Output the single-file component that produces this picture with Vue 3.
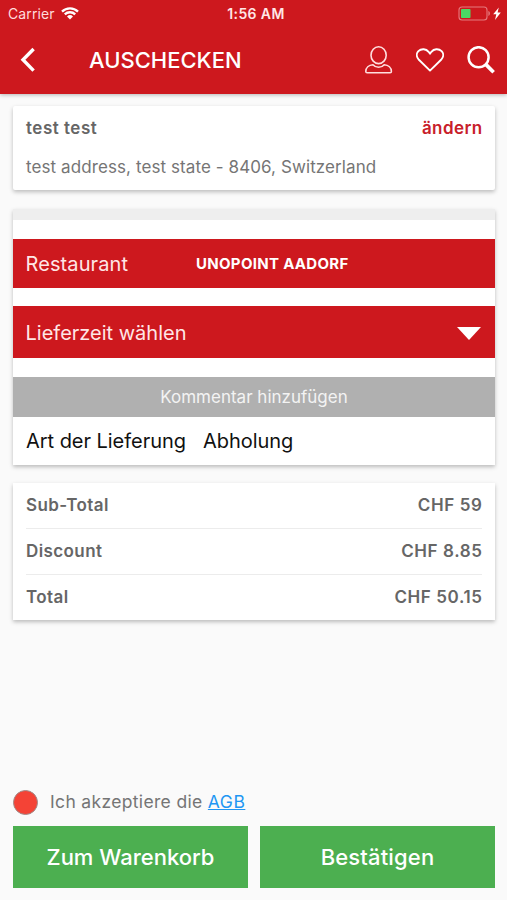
<template>
  <div class="checkout">
    <header class="app-header">
      <div class="status-bar">
        <div class="status-left">
          <span class="carrier">Carrier</span>
          <svg class="wifi" viewBox="0 0 18 13" width="18" height="13">
            <path d="M1 4.6a11.3 11.3 0 0 1 16 0" />
            <path d="M3.8 7.4a7.4 7.4 0 0 1 10.4 0" />
            <path class="wifi-dot" d="M9 12.4L6 9.4a4.3 4.3 0 0 1 6 0z" />
          </svg>
        </div>
        <span class="clock">1:56 AM</span>
        <div class="status-right">
          <svg viewBox="0 0 44 16" width="44" height="16">
            <rect class="battery-case" x="1" y="1" width="28" height="13" rx="3" />
            <rect class="battery-level" x="3" y="3" width="9.5" height="9" rx="0.8" />
            <path class="battery-tip" d="M30.4 5.1c2 .6 2 4.2 0 4.8z" />
            <path class="bolt" d="M40.8 1.5L35.2 8.3h3.1l-1.3 5.6 5.8-7.3h-3.2z" />
          </svg>
        </div>
      </div>

      <div class="nav-bar">
        <button class="icon-btn back-btn" aria-label="Zurück">
          <svg viewBox="0 0 16 26" width="16" height="26">
            <path class="chevron" d="M13.6 2L3 12.8l10.6 10.8" />
          </svg>
        </button>
        <h1 class="nav-title">AUSCHECKEN</h1>
        <div class="nav-actions">
          <button class="icon-btn" aria-label="Konto">
            <svg viewBox="0 0 28 28" width="28" height="28">
              <ellipse class="thin" cx="13.6" cy="9.2" rx="7.6" ry="8.4" />
              <path class="thin" d="M8 18.7C3.8 19 .8 21.6.8 25.4c0 .8.5 1.3 1.3 1.3h23c.8 0 1.3-.5 1.3-1.3 0-3.8-3-6.4-7.2-6.7-1.3 1.6-3.2 2.5-5.6 2.5s-4.3-.9-5.6-2.5z" />
            </svg>
          </button>
          <button class="icon-btn" aria-label="Favoriten">
            <svg viewBox="0 0 28 24" width="28" height="24">
              <path class="heart" d="M14 22.6L2.9 11.8C.2 9 .3 5.4 2.4 3.2c3-3 7.8-2.4 10.2.6L14 5.7l1.4-1.9c2.4-3 7.2-3.6 10.2-.6 2.1 2.2 2.2 5.8-.5 8.6z" />
            </svg>
          </button>
          <button class="icon-btn" aria-label="Suche">
            <svg viewBox="0 0 28 28" width="28" height="28">
              <circle class="lens" cx="11.6" cy="11.2" r="10" />
              <path class="handle" d="M18.8 18.4l7.8 7.8" />
            </svg>
          </button>
        </div>
      </div>
    </header>

    <main class="content">
      <section class="card address-card">
        <div class="address-head">
          <span class="name">test test</span>
          <a class="change-link">ändern</a>
        </div>
        <p class="address">test address, test state - 8406, Switzerland</p>
      </section>

      <section class="card delivery-card">
        <div class="strip"></div>
        <div class="red-row restaurant">
          <span class="restaurant-label">Restaurant</span>
          <span class="restaurant-name">UNOPOINT AADORF</span>
        </div>
        <div class="red-row time-select">
          <span class="time-label">Lieferzeit wählen</span>
          <svg viewBox="0 0 24 13" width="24" height="13">
            <path class="caret" d="M0 0h24L12 13z" />
          </svg>
        </div>
        <button class="comment-btn"><span>Kommentar hinzufügen</span></button>
        <div class="delivery-type">
          <span class="type-label">Art der Lieferung</span>
          <span class="type-value">Abholung</span>
        </div>
      </section>

      <section class="card totals-card">
        <div v-for="row in totals" :key="row.label" class="total-row">
          <span>{{ row.label }}</span>
          <span class="total-value">{{ row.value }}</span>
        </div>
      </section>
    </main>

    <footer class="bottom">
      <div class="terms">
        <span class="radio" :class="{ 'radio--on': accepted }" @click="accepted = !accepted"></span>
        <span class="terms-text">Ich akzeptiere die <a class="terms-link">AGB</a></span>
      </div>
      <div class="actions">
        <button class="action-btn"><span>Zum Warenkorb</span></button>
        <button class="action-btn confirm-btn"><span>Bestätigen</span></button>
      </div>
    </footer>
  </div>
</template>

<script setup>
import { ref } from 'vue'

const accepted = ref(false)

const totals = [
  { label: 'Sub-Total', value: 'CHF 59' },
  { label: 'Discount', value: 'CHF 8.85' },
  { label: 'Total', value: 'CHF 50.15' }
]
</script>

<style>
body {
  margin: 0;
  background: #fafafa;
}
</style>

<style scoped>
.checkout {
  height: 900px;
  display: flex;
  flex-direction: column;
  background: #fafafa;
  color: #666;
  font-family: Inter, "Liberation Sans", sans-serif;
  overflow: hidden;
}

button {
  border: none;
  padding: 0;
  font-family: inherit;
  cursor: pointer;
}

svg {
  display: block;
  fill: none;
  stroke: #fff;
}

/* Header */
.app-header {
  height: 93.5px;
  flex-shrink: 0;
  background: #cd181e;
  color: #fff;
  box-shadow: 0 1px 4px rgba(0, 0, 0, 0.28);
}

.status-bar {
  height: 27px;
  padding: 0 5px 0 8px;
  display: grid;
  grid-template-columns: 1fr auto 1fr;
  align-items: center;
}

.status-left {
  display: flex;
  align-items: center;
  gap: 7px;
}

.carrier {
  font-size: 14px;
  letter-spacing: 0.1px;
  color: #ffdcdc;
}

.wifi {
  margin-left: -1px;
  stroke-width: 2.3;
}

.wifi-dot {
  fill: #fff;
  stroke: none;
}

.clock {
  margin-left: 2px;
  font-size: 14px;
  font-weight: 600;
  letter-spacing: 0.4px;
  color: #ffe6e6;
}

.status-right {
  justify-self: end;
}

.battery-case {
  stroke: #e57a7e;
  stroke-width: 1.1;
}

.battery-level {
  fill: #4cd964;
  stroke: none;
}

.battery-tip {
  fill: #e57a7e;
  stroke: none;
}

.bolt {
  fill: #fff;
  stroke: none;
}

.nav-bar {
  height: 66px;
  padding: 0 12px 0 20px;
  display: flex;
  align-items: center;
}

.icon-btn {
  background: none;
}

.chevron {
  stroke-width: 3.4;
}

.nav-title {
  flex: 1;
  margin: 0 0 0 53px;
  font-size: 22px;
  font-weight: 500;
}

.nav-actions {
  display: flex;
  align-items: center;
  gap: 23px;
}

.thin {
  stroke: #ffdede;
  stroke-width: 1.6;
  stroke-linejoin: round;
}

.heart {
  stroke-width: 1.9;
  stroke-linejoin: round;
}

.lens {
  stroke-width: 2.5;
}

.handle {
  stroke-width: 3.7;
}

/* Cards */
.content {
  flex: 1;
  padding: 12.5px 12px 0 13px;
}

.card {
  background: #fff;
  box-shadow: 0 2px 4px rgba(0, 0, 0, 0.25);
}

.address-card {
  height: 84px;
  box-sizing: border-box;
  padding: 12px 13px;
  border-radius: 2px;
}

.address-head {
  display: flex;
  justify-content: space-between;
  line-height: 20px;
  font-size: 17px;
  font-weight: 600;
  letter-spacing: 0.5px;
}

.change-link {
  margin-right: -0.5px;
  letter-spacing: 0.4px;
  color: #c8202a;
}

.address {
  margin: 19px 0 0;
  line-height: 20px;
  font-size: 17px;
  letter-spacing: 0.09px;
  color: #757575;
}

.delivery-card {
  height: 256px;
  margin-top: 19px;
}

.strip {
  height: 11px;
  background: #eee;
}

.red-row {
  box-sizing: border-box;
  padding: 0 14px 0 12.5px;
  display: flex;
  align-items: center;
  background: #cd181e;
  color: #ffe6e6;
  font-size: 20px;
}

.restaurant {
  height: 49px;
  margin-top: 19px;
}

.restaurant-label {
  width: 170.5px;
  letter-spacing: 0.1px;
}

.restaurant-name {
  font-size: 15px;
  font-weight: 700;
  letter-spacing: 0.3px;
  color: #fff;
}

.time-select {
  height: 52px;
  margin-top: 18px;
  padding-top: 2px;
  justify-content: space-between;
}

.caret {
  fill: #fff;
  stroke: none;
}

.comment-btn {
  width: 100%;
  height: 40px;
  margin-top: 19px;
  display: block;
  background: #b0b0b0;
  color: #f3f3f3;
  font-size: 17px;
}

.delivery-type {
  height: 48px;
  padding: 0 13px;
  display: flex;
  align-items: center;
  gap: 17px;
  color: #111;
  font-size: 20px;
  letter-spacing: -0.04px;
}

.totals-card {
  margin-top: 18px;
  padding: 0 13px;
}

.total-row {
  height: 45px;
  box-sizing: border-box;
  padding-bottom: 2px;
  display: flex;
  align-items: center;
  justify-content: space-between;
  line-height: 22px;
  font-size: 17px;
  font-weight: 600;
  letter-spacing: 0.4px;
}

.total-row + .total-row {
  height: 46px;
  border-top: 1px solid #ececec;
}

.total-value {
  margin-right: -0.5px;
  letter-spacing: 0.6px;
}

/* Bottom area */
.bottom {
  padding: 0 12px 12.5px 13px;
}

.terms {
  margin-bottom: 11px;
  display: flex;
  align-items: center;
  gap: 12px;
  line-height: 22px;
  font-size: 17.5px;
  letter-spacing: 0.34px;
  color: #757575;
}

.terms-text {
  padding-bottom: 1px;
}

.radio {
  width: 25px;
  height: 25px;
  box-sizing: border-box;
  border: 1px solid #a08c8a;
  border-radius: 50%;
  background: #f44336;
}

.radio--on {
  background: #4caf50;
}

.terms-link {
  letter-spacing: 0.5px;
  color: #2196f3;
  text-decoration: underline;
}

.actions {
  display: grid;
  grid-template-columns: 1fr 1fr;
  gap: 12px;
}

.action-btn {
  height: 62px;
  background: #4caf50;
  color: #fff;
  font-size: 22px;
  font-weight: 500;
}

.confirm-btn {
  letter-spacing: 0.15px;
}
</style>
